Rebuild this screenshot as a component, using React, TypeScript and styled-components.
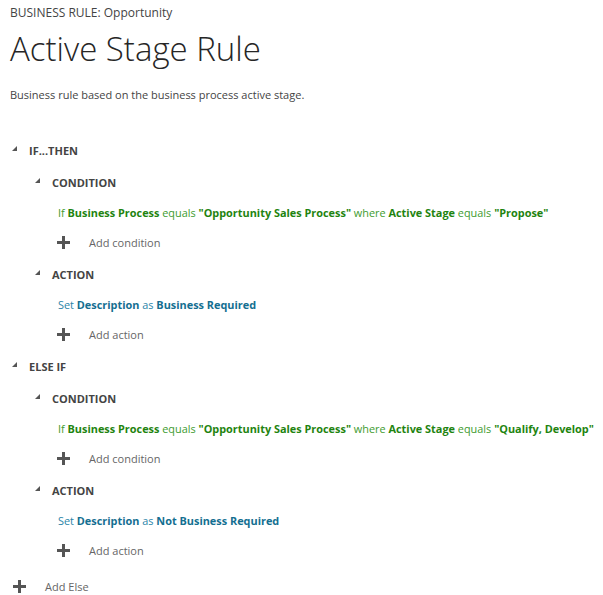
import React, { FC, ReactElement, ReactNode } from 'react';
import styled, { createGlobalStyle } from 'styled-components';

const GlobalStyle = createGlobalStyle`
  html, body {
    margin: 0;
    padding: 0;
    background: #ffffff;
  }
  body {
    font-family: 'Open Sans', 'Noto Sans', sans-serif;
    color: #444444;
  }
`;

type Tone = 'green' | 'blue';

interface Part {
  text: string;
  bold?: boolean;
}

const ifParts = (stage: string): Part[] => [
  { text: 'If ' },
  { text: 'Business Process', bold: true },
  { text: ' equals ' },
  { text: '"Opportunity Sales Process"', bold: true },
  { text: ' where ' },
  { text: 'Active Stage', bold: true },
  { text: ' equals ' },
  { text: `"${stage}"`, bold: true },
];

const setParts = (value: string): Part[] => [
  { text: 'Set ' },
  { text: 'Description', bold: true },
  { text: ' as ' },
  { text: value, bold: true },
];

const branches = [
  {
    title: 'IF...THEN',
    condition: ifParts('Propose'),
    action: setParts('Business Required'),
  },
  {
    title: 'ELSE IF',
    condition: ifParts('Qualify, Develop'),
    action: setParts('Not Business Required'),
  },
];

const Plus: FC = (): ReactElement => (
  <PlusIcon viewBox="0 0 13 13" width={13} height={13}>
    <rect x="5" y="0" width="3" height="13" fill="#555555" />
    <rect x="0" y="5" width="13" height="3" fill="#555555" />
  </PlusIcon>
);

const Heading: FC<{ indent: number; children: ReactNode }> = ({
  indent,
  children,
}): ReactElement => (
  <HeadingRow $indent={indent}>
    <Caret />
    <span>{children}</span>
  </HeadingRow>
);

const Statement: FC<{ parts: Part[]; tone: Tone }> = ({
  parts,
  tone,
}): ReactElement => (
  <StatementRow $tone={tone}>
    {parts.map((part, idx) =>
      part.bold ? <b key={idx}>{part.text}</b> : <span key={idx}>{part.text}</span>,
    )}
  </StatementRow>
);

const AddLink: FC<{ indent: number; label: string }> = ({
  indent,
  label,
}): ReactElement => (
  <AddRow $indent={indent}>
    <Plus />
    <span>{label}</span>
  </AddRow>
);

const App: FC = (): ReactElement => {
  return (
    <Page>
      <GlobalStyle />
      <Kicker>BUSINESS RULE: Opportunity</Kicker>
      <Title>Active Stage Rule</Title>
      <Description>Business rule based on the business process active stage.</Description>
      <Tree>
        {branches.map((branch) => (
          <Branch key={branch.title}>
            <Heading indent={2}>{branch.title}</Heading>
            <Heading indent={25}>CONDITION</Heading>
            <Statement parts={branch.condition} tone="green" />
            <AddLink indent={47} label="Add condition" />
            <Heading indent={25}>ACTION</Heading>
            <Statement parts={branch.action} tone="blue" />
            <AddLink indent={47} label="Add action" />
          </Branch>
        ))}
        <Spacer />
        <AddLink indent={3} label="Add Else" />
      </Tree>
    </Page>
  );
};

export default App;

const Page = styled.div`
  width: 603px;
  height: 595px;
  box-sizing: border-box;
  padding: 0 0 0 10px;
  overflow: hidden;
`;
const Kicker = styled.div`
  height: 26px;
  line-height: 26px;
  font-size: 12px;
  color: #444444;
`;
const Title = styled.h1`
  margin: 0;
  height: 46px;
  line-height: 46px;
  font-size: 33px;
  font-weight: 300;
  color: #262626;
`;
const Description = styled.p`
  margin: 12px 0 0;
  height: 22px;
  line-height: 22px;
  font-size: 11px;
  color: #444444;
`;
const Tree = styled.div`
  margin-top: 28px;
  display: flex;
  flex-direction: column;
`;
const Branch = styled.div`
  display: flex;
  flex-direction: column;
`;
const Spacer = styled.div`
  height: 4px;
`;
const HeadingRow = styled.div<{ $indent: number }>`
  height: 32px;
  display: flex;
  align-items: center;
  gap: 12px;
  padding-left: ${(p) => p.$indent}px;
  font-size: 11px;
  font-weight: 700;
  color: #444444;
`;
const Caret = styled.i`
  width: 0;
  height: 0;
  margin-top: -3px;
  border-style: solid;
  border-width: 0 0 5px 5px;
  border-color: transparent transparent #555555 transparent;
`;
const StatementRow = styled.div<{ $tone: Tone }>`
  height: 28px;
  display: flex;
  align-items: center;
  padding-left: 48px;
  font-size: 10.9px;
  white-space: pre;
  color: ${(p) => (p.$tone === 'green' ? '#3d9b2e' : '#2a84a8')};
  b {
    font-weight: 700;
    color: ${(p) => (p.$tone === 'green' ? '#1f8410' : '#146f91')};
  }
`;
const AddRow = styled.div<{ $indent: number }>`
  height: 32px;
  display: flex;
  align-items: center;
  gap: 19px;
  padding-left: ${(p) => p.$indent}px;
  font-size: 11px;
  color: #666666;
`;
const PlusIcon = styled.svg`
  display: block;
  flex: none;
`;
